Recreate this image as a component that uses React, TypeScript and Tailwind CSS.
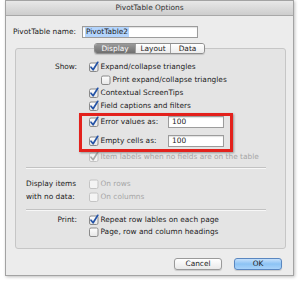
import React from "react";

type BoxProps = { checked?: boolean; disabled?: boolean };

function CheckBox({ checked = false, disabled = false }: BoxProps) {
  const stroke = disabled ? "#c4c4c4" : "#8a8a8a";
  const tick = disabled ? "#a9a9a9" : "#2453a6";
  return (
    <svg width="10" height="10" viewBox="0 0 10 10" className="shrink-0 overflow-visible">
      <defs>
        <linearGradient id="cbg" x1="0" y1="0" x2="0" y2="1">
          <stop offset="0" stopColor="#ffffff" />
          <stop offset="1" stopColor="#e6e6e6" />
        </linearGradient>
      </defs>
      <rect x="0.5" y="1" width="8.5" height="8.5" rx="1.5" fill={disabled ? "#f4f4f4" : "url(#cbg)"} stroke={stroke} />
      {checked && (
        <path d="M2 5.2 L4.1 7.8 L8.8 0.3" fill="none" stroke={tick} strokeWidth="1.7" strokeLinecap="round" strokeLinejoin="round" />
      )}
    </svg>
  );
}

function Row({ label, checked, disabled, className = "" }: { label: string; checked?: boolean; disabled?: boolean; className?: string }) {
  return (
    <div className={`flex items-center gap-[1.5px] whitespace-nowrap ${disabled ? "text-[#a6a6a6]" : ""} ${className}`}>
      <CheckBox checked={checked} disabled={disabled} />
      <span>{label}</span>
    </div>
  );
}

function ValueRow({ label, value, className = "" }: { label: string; value: string; className?: string }) {
  return (
    <div className={`flex items-center whitespace-nowrap ${className}`}>
      <div className="flex w-[79px] items-center gap-[1.5px]">
        <CheckBox checked />
        <span>{label}</span>
      </div>
      <div className="flex h-[12px] w-[56px] items-center border border-[#9c9c9c] bg-white pl-[3px] shadow-[inset_0_1px_1px_rgba(0,0,0,0.12)]">
        {value}
      </div>
    </div>
  );
}

function Separator() {
  return <div className="ml-[10px] w-[240px] border-t border-[#c2c2c2] shadow-[0_1px_0_#f7f7f7]" />;
}

export default function App() {
  return (
    <div className="h-[282px] w-[300px] bg-white pl-[5px] font-['DejaVu_Sans',sans-serif] text-[7.4px] leading-none text-[#1c1c1c]">
      <div className="flex h-[276px] w-[289px] flex-col border border-[#a3a3a3] bg-[#ececec] shadow-[1px_1px_3px_rgba(0,0,0,0.25)]">
        {/* title bar */}
        <div className="flex h-[15px] shrink-0 items-center justify-center border-b border-[#a8a8a8] bg-gradient-to-b from-[#e8e8e8] to-[#cdcdcd] text-[#333]">
          PivotTable Options
        </div>

        {/* name row */}
        <div className="mt-[10px] flex h-[12px] items-center pl-[7px]">
          <span className="w-[69px]">PivotTable name:</span>
          <div className="flex h-[12px] w-[116px] items-center border border-[#9c9c9c] bg-white pl-[2px] shadow-[inset_0_1px_1px_rgba(0,0,0,0.12)]">
            <span className="bg-[#b3d4fc] px-[1px] py-[1.5px]">PivotTable2</span>
          </div>
        </div>

        {/* tabs */}
        <div className="relative z-10 mt-[5px] flex h-[11px] justify-center pr-[1px] pl-[1px]">
          <div className="flex overflow-hidden rounded-[3px] border border-[#8e8e8e] shadow-[0_1px_1px_rgba(0,0,0,0.15)]">
            <div className="flex w-[40px] items-center justify-center bg-gradient-to-b from-[#9a9a9a] to-[#6f6f6f] text-white">Display</div>
            <div className="flex w-[35px] items-center justify-center border-l border-[#a0a0a0] bg-gradient-to-b from-white to-[#ececec]">Layout</div>
            <div className="flex w-[34px] items-center justify-center border-l border-[#a0a0a0] bg-gradient-to-b from-white to-[#ececec]">Data</div>
          </div>
        </div>

        {/* group box */}
        <div className="relative -mt-[6px] ml-[9px] h-[201px] w-[271px] rounded-[3px] border border-[#c6c6c6] bg-[#e4e4e4] pt-[11px]">
          <div className="flex pl-[10px]">
            <div className="w-[51px] pt-[3px] text-right">Show:</div>
            <div className="ml-[12px] flex flex-col">
              <Row label="Expand/collapse triangles" checked className="h-[13px]" />
              <Row label="Print expand/collapse triangles" className="ml-[12px] h-[13px]" />
              <Row label="Contextual ScreenTips" checked className="h-[13px]" />
              <Row label="Field captions and filters" checked className="h-[14px]" />
              <ValueRow label="Error values as:" value="100" className="h-[18px]" />
              <ValueRow label="Empty cells as:" value="100" className="h-[20px]" />
              <Row label="Item labels when no fields are on the table" checked disabled className="h-[11px]" />
            </div>
          </div>

          <div className="mt-[5px]">
            <Separator />
          </div>

          <div className="mt-[9px] flex pl-[10px]">
            <div className="w-[51px] pt-[3px] leading-[13px]">
              <div className="-mt-[3px]">Display items</div>
              <div>with no data:</div>
            </div>
            <div className="ml-[12px] flex flex-col">
              <Row label="On rows" disabled className="h-[13px]" />
              <Row label="On columns" disabled className="h-[13px]" />
            </div>
          </div>

          <div className="mt-[6px]">
            <Separator />
          </div>

          <div className="mt-[4px] flex pl-[10px]">
            <div className="flex h-[12px] w-[51px] items-center justify-end">Print:</div>
            <div className="ml-[12px] flex flex-col">
              <Row label="Repeat row lables on each page" checked className="h-[12px]" />
              <Row label="Page, row and column headings" className="h-[12px]" />
            </div>
          </div>

          {/* annotation overlay */}
          <div className="absolute top-[64px] left-[63px] h-[39px] w-[154px] border-[3px] border-[#e3211c] shadow-[1px_1px_2px_rgba(0,0,0,0.35)]" />
        </div>

        {/* buttons */}
        <div className="mt-[9px] flex justify-end gap-[12px] pr-[11px]">
          <button className="flex h-[12px] w-[48px] items-center justify-center rounded-[3px] border border-[#9a9a9a] bg-gradient-to-b from-white to-[#e9e9e9] shadow-[0_1px_1px_rgba(0,0,0,0.15)]">
            Cancel
          </button>
          <button className="flex h-[12px] w-[48px] items-center justify-center rounded-[3px] border border-[#5a87c0] bg-gradient-to-b from-[#c5e0fb] via-[#8cc3f4] to-[#a9d3fa] shadow-[0_1px_1px_rgba(0,0,0,0.15)]">
            OK
          </button>
        </div>
      </div>
    </div>
  );
}
